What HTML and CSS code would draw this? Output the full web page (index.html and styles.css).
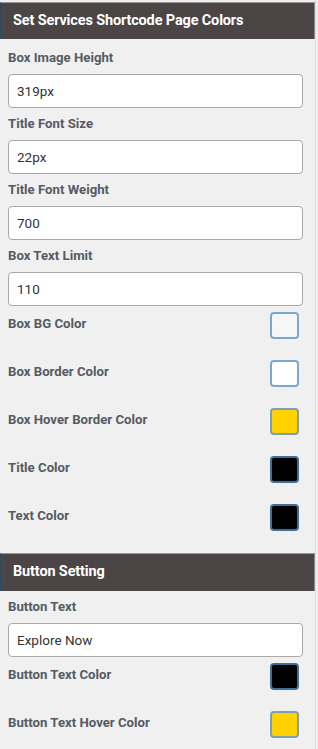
FILE: index.html
```html
<!DOCTYPE html>
<html>
<head>
<meta charset="utf-8">
<link rel="stylesheet" href="styles.css">
</head>
<body>
<div class="panel">
  <section class="section">
    <h2 class="section-head">Set Services Shortcode Page Colors</h2>
    <div class="fields">
      <div class="field">
        <label class="label">Box Image Height</label>
        <input class="input" type="text" value="319px">
      </div>
      <div class="field">
        <label class="label">Title Font Size</label>
        <input class="input" type="text" value="22px">
      </div>
      <div class="field">
        <label class="label">Title Font Weight</label>
        <input class="input" type="text" value="700">
      </div>
      <div class="field">
        <label class="label">Box Text Limit</label>
        <input class="input" type="text" value="110">
      </div>
      <div class="color-row">
        <span class="label">Box BG Color</span>
        <span class="swatch swatch-light"></span>
      </div>
      <div class="color-row">
        <span class="label">Box Border Color</span>
        <span class="swatch swatch-white"></span>
      </div>
      <div class="color-row">
        <span class="label">Box Hover Border Color</span>
        <span class="swatch swatch-yellow"></span>
      </div>
      <div class="color-row">
        <span class="label">Title Color</span>
        <span class="swatch swatch-black"></span>
      </div>
      <div class="color-row">
        <span class="label">Text Color</span>
        <span class="swatch swatch-black"></span>
      </div>
    </div>
  </section>
  <section class="section section-second">
    <h2 class="section-head">Button Setting</h2>
    <div class="fields fields-second">
      <div class="field">
        <label class="label">Button Text</label>
        <input class="input" type="text" value="Explore Now">
      </div>
      <div class="color-row">
        <span class="label">Button Text Color</span>
        <span class="swatch swatch-black"></span>
      </div>
      <div class="color-row">
        <span class="label">Button Text Hover Color</span>
        <span class="swatch swatch-yellow"></span>
      </div>
    </div>
  </section>
</div>
</body>
</html>
```
FILE: styles.css
```css
html, body {
  margin: 0;
  padding: 0;
  background: #f0f0f0;
}
body {
  font-family: Roboto, "Liberation Sans", Arial, sans-serif;
  height: 749px;
  overflow: hidden;
}
.panel {
  width: 316px;
  min-height: 749px;
  border-right: 1px solid #dcdcdc;
  box-sizing: border-box;
  padding-top: 2px;
}
.section-head {
  margin: 0;
  height: 37px;
  box-sizing: border-box;
  width: 315px;
  background: #4b4645;
  border-top: 1px solid #9a9696;
  border-left: 1px solid #2f4a5e;
  border-right: 1px solid #8d8a89;
  color: #fff;
  font-size: 14.5px;
  font-weight: 700;
  line-height: 35px;
  padding-left: 12px;
  letter-spacing: -0.15px;
}
.section-second .section-head {
  height: 38px;
  line-height: 36px;
}
.fields {
  padding: 4px 12px 7px 8px;
}
.fields-second {
  padding-top: 1px;
}
.field {
  display: flex;
  flex-direction: column;
  gap: 8px;
  padding-top: 8px;
}
.field:first-child {
  padding-top: 7px;
}
.label {
  display: block;
  font-size: 13.2px;
  font-weight: 700;
  color: #555b62;
  line-height: 16px;
}
.input {
  height: 34px;
  box-sizing: border-box;
  border: 1px solid #a9a9a9;
  border-radius: 4px;
  background: #fff;
  padding: 0 8px;
  font-family: Roboto, "Liberation Sans", Arial, sans-serif;
  font-size: 13.5px;
  color: #333;
  width: 100%;
  margin: 0;
  outline: none;
}
.color-row {
  display: flex;
  justify-content: space-between;
  align-items: flex-start;
  height: 48px;
  box-sizing: border-box;
  padding-top: 6px;
  padding-right: 4px;
}
.color-row .label {
  line-height: 24px;
}
.swatch {
  width: 29px;
  height: 27px;
  box-sizing: border-box;
  border: 2px solid #7ba7d3;
  border-radius: 4px;
}
.swatch-light { background: #f6f6f6; }
.swatch-white { background: #ffffff; }
.swatch-yellow { background: #ffd200; border-color: #7e9fb0; }
.swatch-black { background: #000; border-color: #3d6f98; }
```
